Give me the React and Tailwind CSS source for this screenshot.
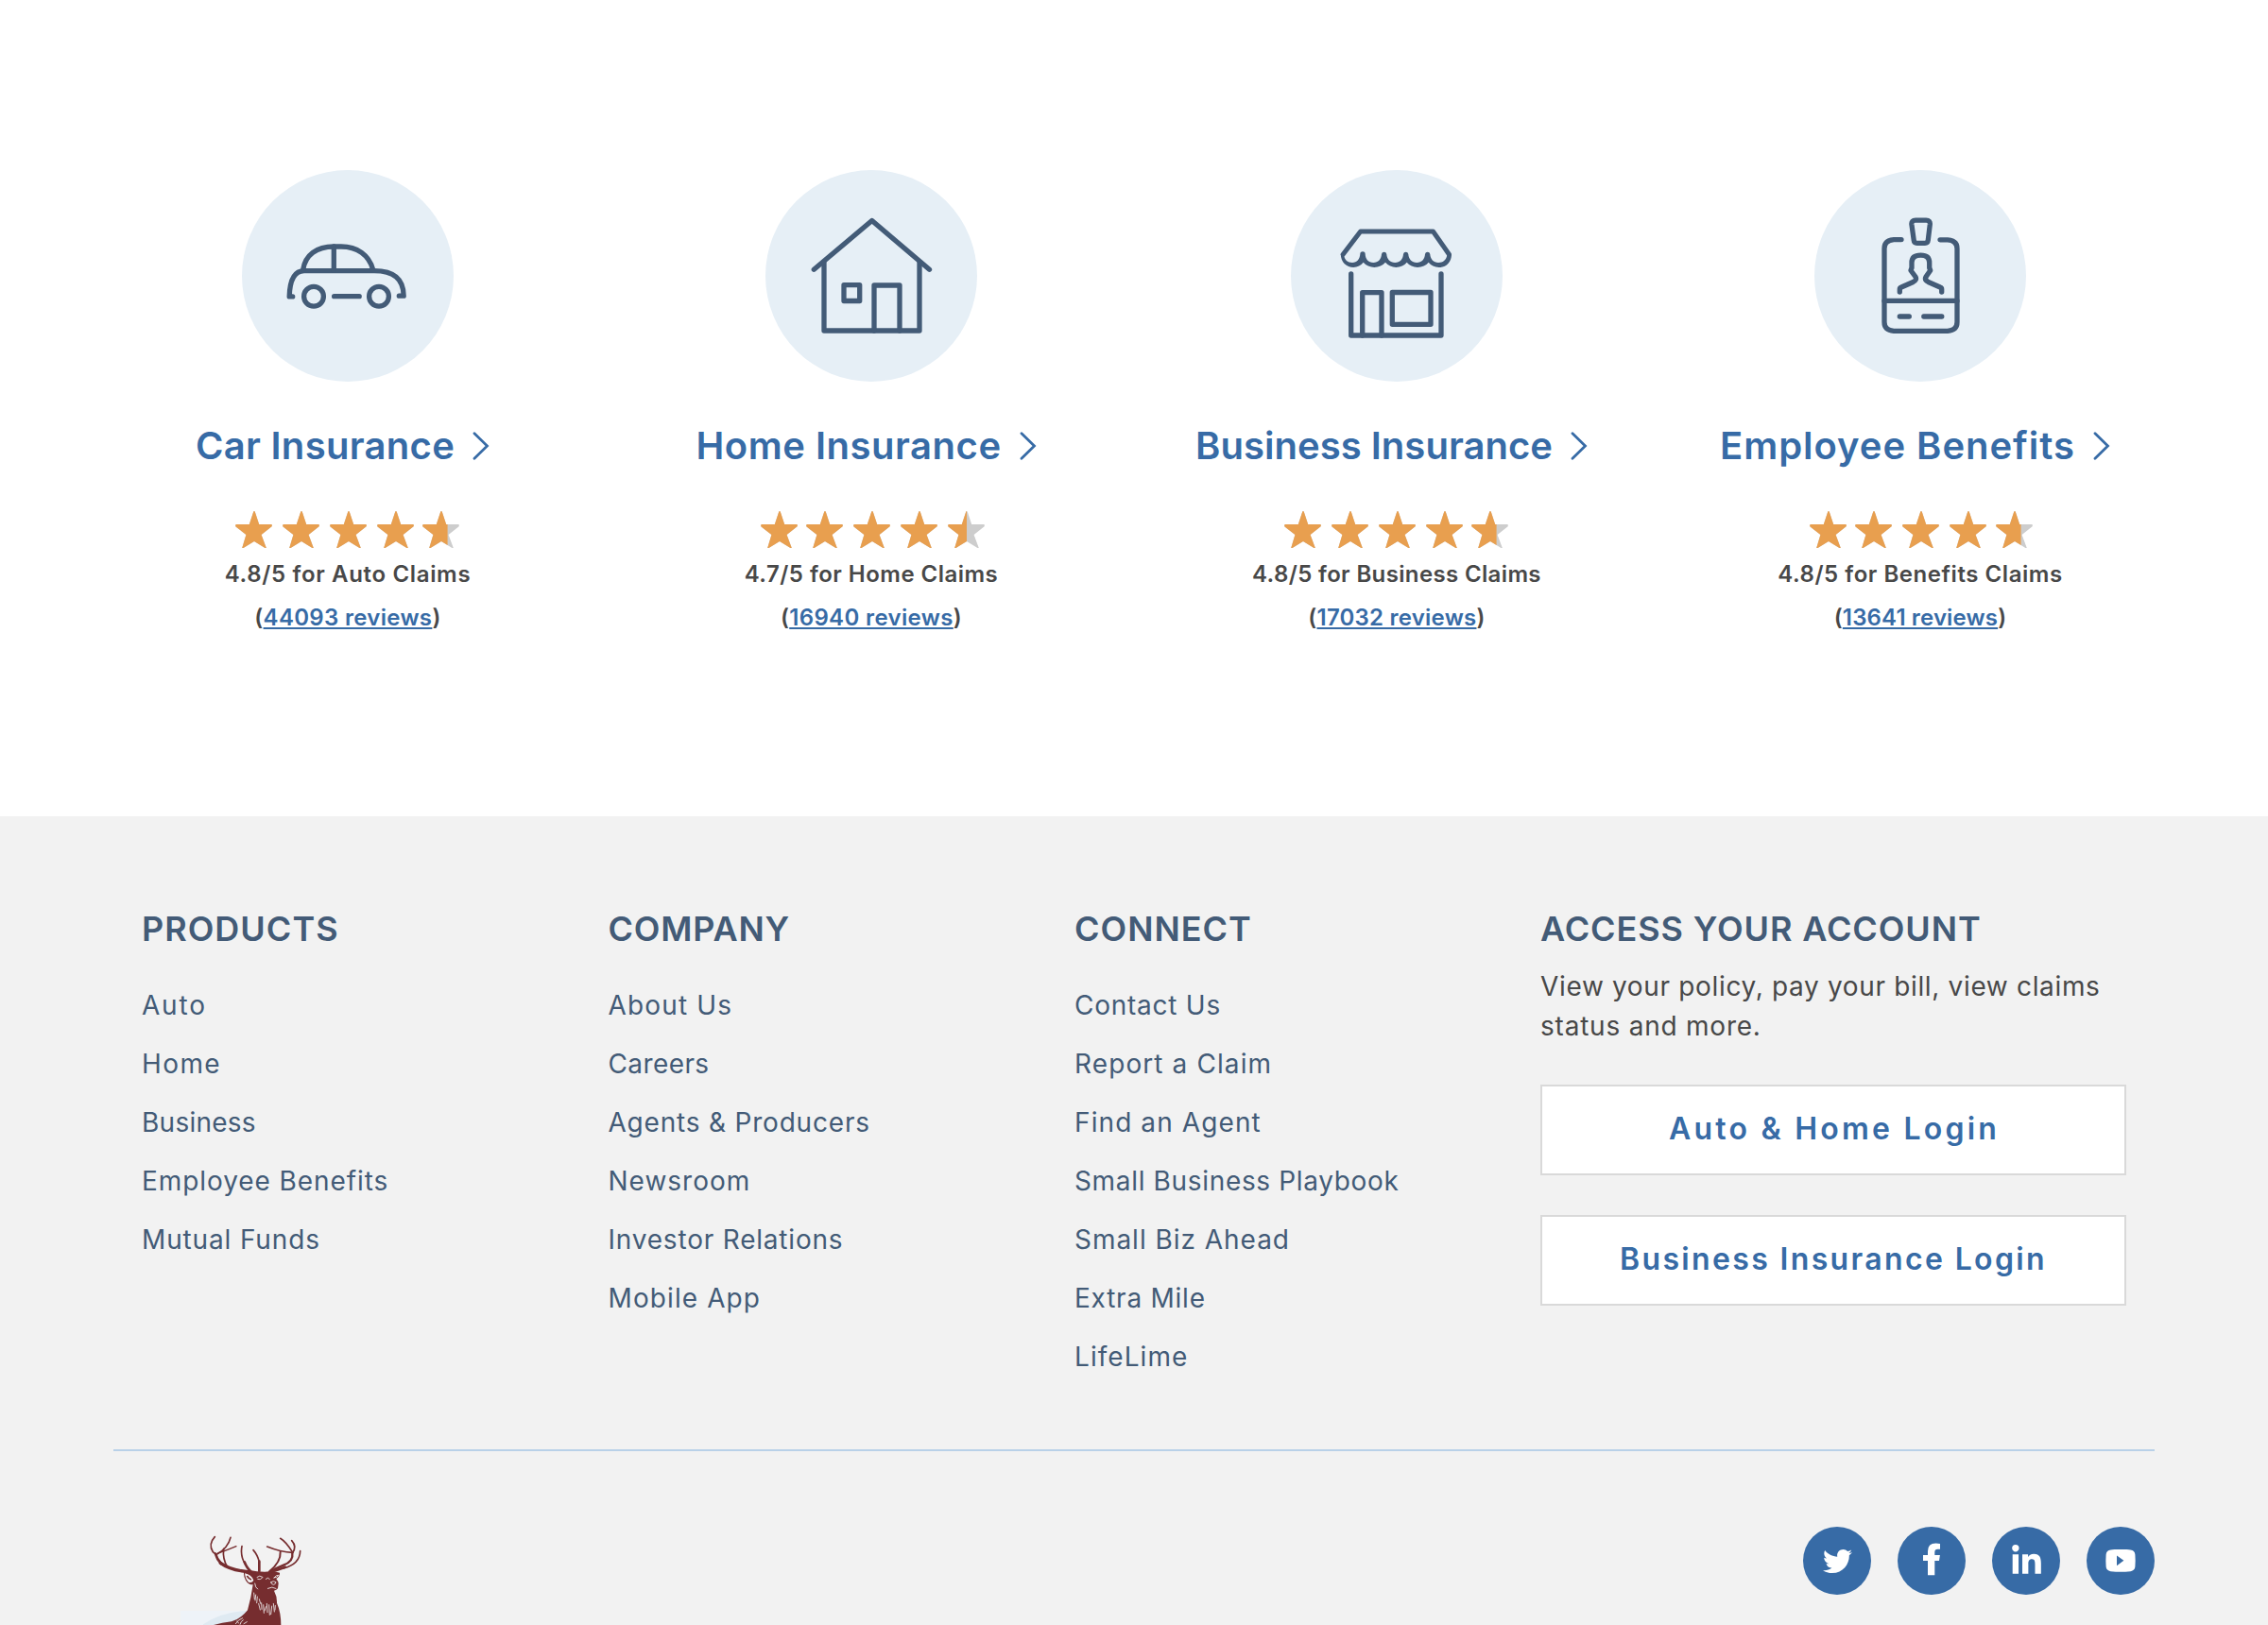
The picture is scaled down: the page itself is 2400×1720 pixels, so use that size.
import { FaTwitter, FaLinkedinIn } from "react-icons/fa";

const STAR =
  "M20 0 Q20.6 0 20.9 1 L25.2 14 H38.2 Q39.3 14.6 38.6 16.2 L27.6 25 L32.8 39 H31.4 L20 32 L8.6 39 H7.2 L11.4 25 L.5 16.4 Q-.4 14.8 1 14 H14.8 L19.1 1 Q19.4 0 20 0Z";

function Star({ fill = 40, className = "" }) {
  return (
    <svg viewBox="0 0 40 40" className={`size-10 shrink-0 ${className}`}>
      <path d={STAR} fill="#cdcdcd" />
      <svg width={fill} height="40">
        <path d={STAR} fill="#e89f4f" />
      </svg>
    </svg>
  );
}

function IconCircle({ children }) {
  return (
    <div className="size-56 rounded-full bg-[#e6eff6]">
      <svg
        viewBox="0 0 224 224"
        className="size-56"
        fill="none"
        stroke="#435b77"
        strokeWidth="5.3"
        strokeLinecap="round"
        strokeLinejoin="round"
      >
        {children}
      </svg>
    </div>
  );
}

const carIcon = (
  <>
    <circle cx="76" cy="133.7" r="10.4" />
    <circle cx="145" cy="133.7" r="10.4" />
    <path d="M97.6 133.7H124.2" />
    <path d="M53.7 133.9H50.2C50.6 118 54.5 106.7 66 106.7H140C160 106.7 171 114.5 171.2 133.2H166.3" />
    <path d="M64.7 105.5C67 90 79 81 97.3 81H105C122 81 134.5 90 138.5 105" />
    <path d="M97.3 81V106" />
  </>
);

const homeIcon = (
  <>
    <path d="M51.3 105.3L112.7 53.5L173.5 105.3" />
    <path d="M62 98V170H163V98" />
    <path d="M83 121.7H99.7V138.5H83Z" />
    <path d="M115 170V122H142V170" />
  </>
);

const shopIcon = (
  <>
    <path strokeWidth="5" d="M55.2 89.2L73.7 65H150.5L167.4 89.2" />
    <path
      stroke="none"
      fill="#435b77"
      d="M52.8 89C52.8 97.5 59 103 66.3 103C70.5 103 74 101 76.7 97.8C79.5 101 84 103 88.3 103C93 103 97 101 100 97.8C103 101 107 103 111.3 103C116 103 120 101 122.7 97.8C125.5 101 129.5 103 134 103C139 103 143 101 145.7 97.8C148.5 101 152 103 156.7 103C164.5 103 170 97.5 170 89L165.3 90C164.5 95 161 98 156 98C151 98 147.5 94 147.3 89A2.7 2.7 0 0 0 142 89C141.8 94 138.5 98 133.2 98C128 98 124.5 94 124.3 89A2.7 2.7 0 0 0 119 89C118.8 94 115.5 98 110.2 98C105 98 101.5 94 101.3 89A2.7 2.7 0 0 0 96 89C95.8 94 92.5 98 87.3 98C82 98 78.8 94 78.7 89A2.7 2.7 0 0 0 73.3 89C73 94 70 98 65 98C60 98 56.8 95 56.3 90.5Z"
    />
    <path d="M63.7 110V175H159V110" />
    <path d="M75.7 175V129.7H96V175" />
    <path d="M107.3 129.5H148V163.3H107.3Z" />
  </>
);

const badgeIcon = (
  <>
    <path d="M107 53.2H118.3Q122.7 53.2 122.3 57.5L120.3 74Q120 77.3 117 77.3H108.5Q105.5 77.3 105.2 74L102.9 57.5Q102.5 53.2 107 53.2Z" />
    <path d="M92 73.7H84Q74 74.5 74 83V161Q74 169.5 84 170.3H141Q151 169.5 151 161V83Q151 74.5 141 73.8H133" />
    <path d="M74 138.4H151" />
    <path d="M90.3 155H100.3M115.8 155H134.8" />
    <path d="M90.3 129V126Q90.3 124.7 92 124L104.5 118.5Q108.8 116.3 107 113L102 106.2L103 103.5V98C103 93 106 90.2 112.5 90.2C119 90.2 121.7 93 121.7 98V103.5L122.7 106.2L118 113Q116.3 116.3 120.5 118.5L133 124Q134.7 124.7 134.7 126V129" />
  </>
);

const products = [
  {
    icon: carIcon, title: "Car Insurance", titleCls: "tracking-[0.3px]",
    fill: 26.6, rating: "4.8/5 for Auto Claims", ratingCls: "tracking-[0.66px]",
    reviews: "44093 reviews", reviewsCls: "tracking-[0.31px]", first: "", last: "-ml-[2.4px]", row: "",
  },
  {
    icon: homeIcon, title: "Home Insurance", titleCls: "tracking-[0.52px]",
    fill: 20, rating: "4.7/5 for Home Claims", ratingCls: "tracking-[0.48px]",
    reviews: "16940 reviews", reviewsCls: "tracking-[0.35px]", first: "mr-[-2px]", last: "", row: "pl-[3px]",
  },
  {
    icon: shopIcon, title: "Business Insurance", titleCls: "tracking-[0.03px]",
    fill: 26.6, rating: "4.8/5 for Business Claims", ratingCls: "tracking-[0.36px]",
    reviews: "17032 reviews", reviewsCls: "tracking-[0.23px]", first: "", last: "-ml-[2.4px]", row: "",
  },
  {
    icon: badgeIcon, title: "Employee Benefits", titleCls: "tracking-[0.96px]",
    fill: 26.6, rating: "4.8/5 for Benefits Claims", ratingCls: "tracking-[0.55px]",
    reviews: "13641 reviews", reviewsCls: "tracking-[0.14px]", first: "mr-[-2px]", last: "-ml-[0.4px]", row: "pl-[3px]",
  },
];

function Product({ p }) {
  return (
    <div className="flex flex-col items-center">
      <IconCircle>{p.icon}</IconCircle>
      <a className="mt-[43px] flex items-center gap-[18px] pr-[11px] text-[40px] leading-[49px] font-semibold whitespace-nowrap text-[#376ba6]">
        <span className={p.titleCls}>{p.title}</span>
        <svg viewBox="0 0 19 30" className="h-[30px] w-[19px]" fill="none" stroke="#376ba6" strokeWidth="2.8" strokeLinecap="round" strokeLinejoin="miter">
          <path d="M3 1.8L16.5 15L3 28.2" />
        </svg>
      </a>
      <div className={`mt-[45px] flex gap-2.5 ${p.row}`}>
        <Star className={p.first} />
        <Star />
        <Star />
        <Star />
        <Star fill={p.fill} className={p.last} />
      </div>
      <div className="mt-1 text-center text-2xl leading-[46px] font-semibold whitespace-nowrap text-[#484848]">
        <p className={p.ratingCls}>{p.rating}</p>
        <p className={p.reviewsCls}>
          (<a className="text-[#376ba6] underline decoration-2 underline-offset-2 [text-decoration-skip-ink:none]">{p.reviews}</a>)
        </p>
      </div>
    </div>
  );
}

const columns = [
  {
    title: "PRODUCTS", cls: "tracking-[1px]",
    links: [
      ["Auto", "tracking-[1.8px]"],
      ["Home", "tracking-[1.4px]"],
      ["Business", "tracking-[0.25px]"],
      ["Employee Benefits", "tracking-[0.92px]"],
      ["Mutual Funds", "tracking-[0.85px]"],
    ],
  },
  {
    title: "COMPANY", cls: "tracking-[0.79px]",
    links: [
      ["About Us", "tracking-[1.15px]"],
      ["Careers", "tracking-[0.4px]"],
      ["Agents & Producers", "tracking-[0.8px]"],
      ["Newsroom", "tracking-[1px]"],
      ["Investor Relations", "tracking-[0.8px]"],
      ["Mobile App", "tracking-[1.1px]"],
    ],
  },
  {
    title: "CONNECT", cls: "tracking-[0.97px]",
    links: [
      ["Contact Us", "tracking-[0.75px]"],
      ["Report a Claim", "tracking-[1.1px]"],
      ["Find an Agent", "tracking-[1.1px]"],
      ["Small Business Playbook", "tracking-[0.66px]"],
      ["Small Biz Ahead", "tracking-[0.97px]"],
      ["Extra Mile", "tracking-[0.76px]"],
      ["LifeLime", "tracking-[1.05px]"],
    ],
  },
];

function Social({ children }) {
  return (
    <a className="flex size-[72px] items-center justify-center rounded-full bg-[#376ba6] text-white">{children}</a>
  );
}

function StagLogo() {
  const red = "#762d2f";
  return (
    <svg viewBox="0 0 840 390" className="h-[130px] w-[280px]">
      <path d="M213 345H430V390H213Z" fill="#eef3f8" />
      <path d="M285 388Q340 350 420 345L430 390H285Z" fill="#dfeaf2" />
      <path
        fill={red}
        d="M318 390Q345 382 375 379Q405 370 426 343Q437 305 443 262Q428 262 420 248Q413 236 414 223L432 216Q455 221 480 221Q505 217 528 224Q529 235 517 243Q524 252 524 258L522 274Q518 280 510 281Q520 300 519 320Q532 350 532 390Z"
      />
      <g fill="none" stroke={red} strokeLinecap="round">
        <path strokeWidth="5" d="M322 110Q300 134 316 158L326 166" />
        <path strokeWidth="8" d="M324 164Q328 180 342 195" />
        <path strokeWidth="10" d="M340 193Q370 216 434 222" />
        <path strokeWidth="5" d="M372 112Q364 145 328 166" />
        <path strokeWidth="4" d="M390 140Q362 152 332 162" />
        <path strokeWidth="5" d="M350 148Q346 180 362 206" />
        <path strokeWidth="5" d="M408 140Q402 170 418 196" />
        <path strokeWidth="8" d="M416 190Q424 210 436 220" />
        <path strokeWidth="5" d="M444 152Q458 168 463 190" />
        <path strokeWidth="8" d="M463 188L463 219" />
        <path strokeWidth="5" d="M566 122Q584 142 568 162" />
        <path strokeWidth="7" d="M568 162Q572 188 540 200Q515 210 495 222" />
        <path strokeWidth="5" d="M593 155Q592 196 540 210" />
        <path strokeWidth="8" d="M545 206Q520 216 496 222" />
        <path strokeWidth="5" d="M530 115Q548 126 568 158" />
        <path strokeWidth="5" d="M488 141Q530 158 570 160" />
        <path strokeWidth="6" d="M530 158Q532 190 496 219" />
      </g>
      <path d="M417 226Q438 230 445 248Q440 257 429 254Q419 244 417 226Z" fill="#f2f2f2" />
      <path d="M424 234Q430 244 438 246" fill="none" stroke={red} strokeWidth="5" />
      <g fill="none" stroke="#f2f2f2" strokeWidth="2.5" strokeLinecap="round">
        <path d="M456 238Q464 230 474 238M458 244Q468 248 472 240M484 244Q490 236 496 244M510 240Q518 230 524 232Q520 240 510 240" />
        <path d="M500 254Q508 248 516 254Q516 260 508 262Q500 260 500 254M490 274Q504 266 516 274M449 258Q450 272 458 276" />
        <path d="M446 288L448 308M452 294L450 312M457 300L455 320M461 322L466 342M463 308L467 322M470 320L471 340M476 326L478 352M484 332L480 345M487 322L489 350M494 326L496 358M503 330L500 356M508 322L511 348M514 328L513 342" />
        <path d="M388 386Q396 372 410 368M402 388Q404 378 412 374M392 378L398 384M414 386L424 380" />
      </g>
    </svg>
  );
}

export default function App() {
  return (
    <div className="flex h-[1720px] w-[2400px] flex-col overflow-hidden bg-white font-['Inter',sans-serif]">
      <section className="h-[864px] shrink-0 px-[91px] pt-[180px]">
        <div className="grid grid-cols-[554px_554px_558px_550px]">
          {products.map((p) => (
            <Product key={p.title} p={p} />
          ))}
        </div>
      </section>

      <footer className="grow bg-[#f2f2f2] px-[120px] pt-[97px] text-[#435b77]">
        <div className="grid h-[573px] grid-cols-[493.5px_493.5px_493px_620px] pl-[30px]">
          {columns.map((c) => (
            <div key={c.title}>
              <h3 className={`text-4xl leading-[44px] font-semibold ${c.cls}`}>{c.title}</h3>
              <ul className="mt-7 text-[28px] leading-[62px]">
                {c.links.map(([label, cls]) => (
                  <li key={label} className={cls}>{label}</li>
                ))}
              </ul>
            </div>
          ))}
          <div>
            <h3 className="text-4xl leading-[44px] font-semibold tracking-[0.9px] whitespace-nowrap">ACCESS YOUR ACCOUNT</h3>
            <p className="mt-[18px] text-[28px] leading-[42px] whitespace-nowrap text-[#484848]">
              <span className="tracking-[0.66px]">View your policy, pay your bill, view claims</span>
              <br />
              <span className="tracking-[0.78px]">status and more.</span>
            </p>
            <div className="mt-[41px] flex flex-col gap-[42px] text-center text-[32px] leading-[89px] font-semibold text-[#376ba6]">
              <a className="h-24 border-2 border-[#d9d9d9] bg-white pl-0.5 tracking-[3.22px]">Auto &amp; Home Login</a>
              <a className="h-24 border-2 border-[#d9d9d9] bg-white tracking-[2.35px]">Business Insurance Login</a>
            </div>
          </div>
        </div>
        <hr className="border-t-2 border-[#b9d1e8]" />
        <div className="flex items-start justify-between">
          <div className="pt-[54px]">
            <StagLogo />
          </div>
          <div className="flex gap-7 pt-20">
            <Social>
              <FaTwitter size={31} />
            </Social>
            <Social>
              <svg viewBox="0 0 72 72" className="size-[72px]" fill="currentColor">
                <path d="M39.3 51.3V36H44L44.9 30H39.3V27Q39.3 23.8 42.5 23.8H45V17.9Q43 17.6 40.5 17.6Q32 17.6 32 26V30H27V36H32V51.3Z" />
              </svg>
            </Social>
            <Social>
              <FaLinkedinIn size={35} />
            </Social>
            <Social>
              <svg viewBox="0 0 72 72" className="size-[72px]" fill="currentColor">
                <path fillRule="evenodd" d="M36 24C41 24 44.5 24.1 46.5 24.5Q51 25.2 51.4 29.5Q51.9 35.9 51.4 42.3Q51 46.5 46.5 47.2Q41 47.7 36 47.7Q31 47.7 25.5 47.2Q21 46.5 20.6 42.3Q20.1 35.9 20.6 29.5Q21 25.2 25.5 24.5C27.5 24.1 31 24 36 24ZM32 30.6V41.2L39.4 35.8Z" />
              </svg>
            </Social>
          </div>
        </div>
      </footer>
    </div>
  );
}
